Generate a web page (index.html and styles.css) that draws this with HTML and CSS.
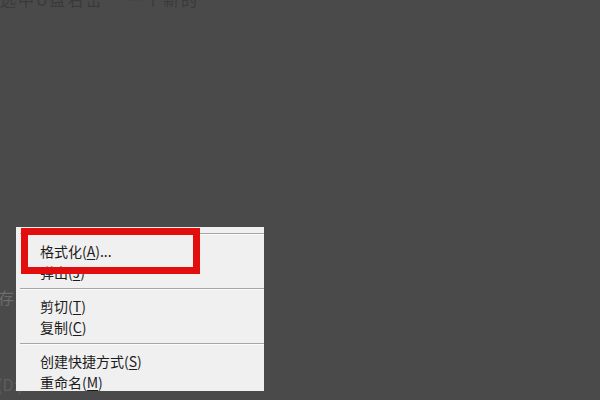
FILE: index.html
```html
<!DOCTYPE html>
<html lang="zh-CN">
<head>
    <meta charset="UTF-8">
    <meta name="viewport" content="width=device-width, initial-scale=1.0">
    <title>格式化U盘</title>
    <link rel="stylesheet" href="styles.css">
</head>
<body>
    <div class="page">
        <p class="faded top-line">选中U盘右击 　一个新的</p>
        <p class="faded save">存</p>
        <p class="faded drive">(D:)</p>
    </div>

    <div class="menu">
        <div class="sep"></div>
        <div class="item">格式化(<u>A</u>)...</div>
        <div class="item">弹出(<u>J</u>)</div>
        <div class="sep"></div>
        <div class="item">剪切(<u>T</u>)</div>
        <div class="item">复制(<u>C</u>)</div>
        <div class="sep"></div>
        <div class="item">创建快捷方式(<u>S</u>)</div>
        <div class="item">重命名(<u>M</u>)</div>
    </div>

    <div class="highlight"></div>
</body>
</html>
```

FILE: styles.css
```css
body {
    margin: 0;
    width: 600px;
    height: 400px;
    overflow: hidden;
    background: #4a4a4a;
    font-family: "Noto Sans CJK SC", "Noto Sans", sans-serif;
}
.page {
    padding: 0;
}
.faded {
    margin: 0;
    font-size: 16px;
    line-height: 20px;
}
.top-line {
    margin-top: -11px;
    color: #3a3a3a;
    letter-spacing: 2px;
}
.save {
    margin-top: 278px;
    margin-left: -2px;
    color: #6c6c6c;
}
.drive {
    margin-top: 67px;
    margin-left: -3px;
    color: #5e5e5e;
}
.menu {
    position: absolute;
    left: 16px;
    top: 227px;
    width: 248px;
    height: 164px;
    overflow: hidden;
    background: #f0f0f0;
    padding-top: 1px;
    box-sizing: border-box;
}
.sep {
    height: 1px;
    margin: 5px 0 6px 4px;
    background: #a6a6a6;
    border-bottom: 1px solid #fbfbfb;
}
.item {
    height: 21px;
    line-height: 21px;
    padding-left: 24px;
    font-size: 14px;
    color: #1c1c1c;
}
.item u {
    text-decoration-thickness: 1px;
    text-underline-offset: 2px;
}
.highlight {
    position: absolute;
    left: 21px;
    top: 228px;
    width: 165px;
    height: 32px;
    border: 7px solid #e20d0d;
}
```
